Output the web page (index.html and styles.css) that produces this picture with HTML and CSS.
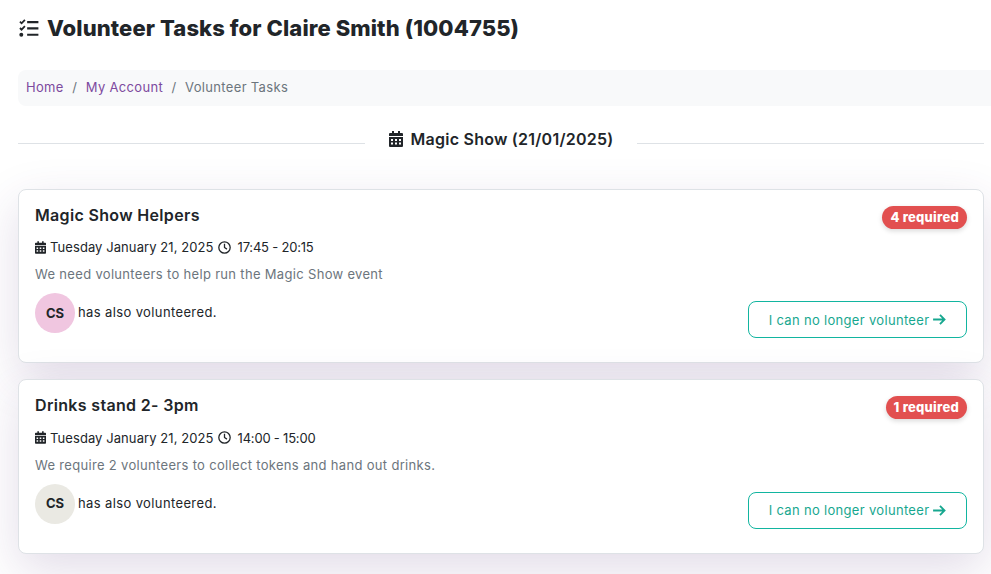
FILE: index.html
```html
<!DOCTYPE html>
<html lang="en">
<head>
    <meta charset="UTF-8">
    <meta name="viewport" content="width=device-width, initial-scale=1.0">
    <title>Volunteer Tasks</title>
    <link rel="stylesheet" href="styles.css">
</head>
<body>

    <!-- Page title -->
    <h1 class="page-title">
        <svg class="title-icon" viewBox="0 0 22 20" width="21" height="18" fill="none" stroke="#212529">
            <path d="M1.500 3l1.800 1.800L7 1M1.500 10l1.800 1.800L7 8" stroke-width="2"/>
            <circle cx="3" cy="17.500" r="2.200" fill="#212529" stroke="none"/>
            <path d="M9.500 3.500H22M9.500 10.500H22M9.500 17.500H22" stroke-width="2.400"/>
        </svg>
        <span>Volunteer Tasks for Claire Smith (1004755)</span>
    </h1>

    <!-- Breadcrumb -->
    <nav class="breadcrumb">
        <a href="#">Home</a>
        <span class="sep">/</span>
        <a href="#">My Account</a>
        <span class="sep">/</span>
        <span class="current">Volunteer Tasks</span>
    </nav>

    <!-- Event divider -->
    <div class="event-heading">
        <span class="line"></span>
        <h2>
            <svg viewBox="0 0 14 16" width="14" height="16" fill="#212529">
                <path d="M3 0h2v2h4V0h2v2h2a1 1 0 0 1 1 1v2H0V3a1 1 0 0 1 1-1h2z"/>
                <path fill-rule="evenodd" d="M0 6h14v9a1 1 0 0 1-1 1H1a1 1 0 0 1-1-1zm2 2v2h2V8zm4 0v2h2V8zm4 0v2h2V8zm-8 3.500v2h2v-2zm4 0v2h2v-2zm4 0v2h2v-2z"/>
            </svg>
            Magic Show (21/01/2025)
        </h2>
        <span class="line"></span>
    </div>

    <!-- Task 1 -->
    <div class="card">
        <div class="card-top">
            <h3>Magic Show Helpers</h3>
            <span class="badge">4 required</span>
        </div>
        <div class="when">
            <svg viewBox="0 0 14 16" width="11" height="13" fill="#212529">
                <path d="M3 0h2v2h4V0h2v2h2a1 1 0 0 1 1 1v2H0V3a1 1 0 0 1 1-1h2z"/>
                <path fill-rule="evenodd" d="M0 6h14v9a1 1 0 0 1-1 1H1a1 1 0 0 1-1-1zm2 2v2h2V8zm4 0v2h2V8zm4 0v2h2V8zm-8 3.500v2h2v-2zm4 0v2h2v-2zm4 0v2h2v-2z"/>
            </svg>
            <span>Tuesday January 21, 2025</span>
            <svg viewBox="0 0 16 16" width="13" height="13" fill="none" stroke="#212529" stroke-width="1.600">
                <circle cx="8" cy="8" r="7"/>
                <path d="M8 3.500V8l3 2"/>
            </svg>
            <span class="time">17:45 - 20:15</span>
        </div>
        <p class="desc">We need volunteers to help run the Magic Show event</p>
        <div class="card-bottom">
            <div class="others">
                <span class="avatar pink">CS</span>
                <span class="others-text">has also volunteered.</span>
            </div>
            <a href="#" class="btn">I can no longer volunteer
                <svg viewBox="0 0 14 12" width="13" height="11" fill="none" stroke="#17a78f" stroke-width="2">
                    <path d="M0 6h12M7.500 1l5 5-5 5"/>
                </svg>
            </a>
        </div>
    </div>

    <!-- Task 2 -->
    <div class="card">
        <div class="card-top">
            <h3>Drinks stand 2- 3pm</h3>
            <span class="badge">1 required</span>
        </div>
        <div class="when">
            <svg viewBox="0 0 14 16" width="11" height="13" fill="#212529">
                <path d="M3 0h2v2h4V0h2v2h2a1 1 0 0 1 1 1v2H0V3a1 1 0 0 1 1-1h2z"/>
                <path fill-rule="evenodd" d="M0 6h14v9a1 1 0 0 1-1 1H1a1 1 0 0 1-1-1zm2 2v2h2V8zm4 0v2h2V8zm4 0v2h2V8zm-8 3.500v2h2v-2zm4 0v2h2v-2zm4 0v2h2v-2z"/>
            </svg>
            <span>Tuesday January 21, 2025</span>
            <svg viewBox="0 0 16 16" width="13" height="13" fill="none" stroke="#212529" stroke-width="1.600">
                <circle cx="8" cy="8" r="7"/>
                <path d="M8 3.500V8l3 2"/>
            </svg>
            <span class="time">14:00 - 15:00</span>
        </div>
        <p class="desc">We require 2 volunteers to collect tokens and hand out drinks.</p>
        <div class="card-bottom">
            <div class="others">
                <span class="avatar grey">CS</span>
                <span class="others-text">has also volunteered.</span>
            </div>
            <a href="#" class="btn">I can no longer volunteer
                <svg viewBox="0 0 14 12" width="13" height="11" fill="none" stroke="#17a78f" stroke-width="2">
                    <path d="M0 6h12M7.500 1l5 5-5 5"/>
                </svg>
            </a>
        </div>
    </div>

</body>
</html>
```

FILE: styles.css
```css
body {
    margin: 0;
    padding: 0 7px 20px 18px;
    background-color: #fff;
    font-family: 'Inter', 'Liberation Sans', sans-serif;
    font-size: 13px;
    color: #212529;
    overflow: hidden;
}

/* Page title */
.page-title {
    display: flex;
    align-items: center;
    gap: 8px;
    margin: 0;
    padding-top: 14px;
    height: 28px;
    font-size: 22px;
    font-weight: 800;
    letter-spacing: 0.1px;
}

.title-icon {
    flex-shrink: 0;
}

/* Breadcrumb */
.breadcrumb {
    display: flex;
    align-items: center;
    gap: 8.5px;
    height: 34px;
    margin: 28px -7px 0 0;
    padding: 0 0 2px 8px;
    background-color: #f8f9fa;
    border-radius: 8px 0 0 8px;
    color: #6c757d;
    letter-spacing: 0.33px;
}

.breadcrumb a {
    color: #7d4a9e;
    text-decoration: none;
}

.sep {
    color: #6c757d;
}

/* Event divider */
.event-heading {
    display: flex;
    align-items: center;
    gap: 24px;
    height: 28px;
    margin-top: 19px;
}

.event-heading .line {
    flex: 1;
    margin-top: 8px;
    border-top: 1px solid #dee2e6;
}

.event-heading h2 {
    display: flex;
    align-items: center;
    gap: 8px;
    margin: 0;
    font-size: 16px;
    font-weight: 600;
    letter-spacing: 0.24px;
}

/* Task cards */
.card {
    height: 172.3px;
    margin-top: 16.1px;
    padding: 0 16px;
    background-color: #fff;
    border: 1px solid #dee2e6;
    border-radius: 8px;
    box-shadow: 0 16px 48px rgba(82, 45, 120, 0.17);
}

.event-heading + .card {
    margin-top: 36px;
}

.card-top {
    display: flex;
    justify-content: space-between;
    align-items: flex-start;
    padding-top: 15px;
}

.card-top h3 {
    margin: 0;
    font-size: 16px;
    font-weight: 600;
    line-height: 20px;
    letter-spacing: 0.33px;
}

.badge {
    margin-top: 1px;
    padding: 3px 8px;
    background-color: #e25050;
    border-radius: 12px;
    box-shadow: 0 2px 5px rgba(0, 0, 0, 0.15);
    color: #fff;
    font-size: 13px;
    font-weight: 800;
    line-height: 17px;
    letter-spacing: 0.25px;
}

.when {
    display: flex;
    align-items: center;
    gap: 4px;
    margin-top: 8.4px;
    height: 20px;
    letter-spacing: 0.08px;
}

.time {
    margin-left: 3px;
    letter-spacing: -0.2px;
}

.desc {
    margin: 7px 0 0;
    line-height: 20px;
    color: #6c757d;
    letter-spacing: 0.32px;
}

.card-bottom {
    display: flex;
    justify-content: space-between;
    align-items: flex-start;
    margin-top: 9px;
}

.others {
    display: flex;
    align-items: flex-start;
    gap: 3px;
}

.others-text {
    line-height: 38px;
    letter-spacing: 0.38px;
}

.avatar {
    display: flex;
    justify-content: center;
    align-items: center;
    width: 40px;
    height: 39px;
    padding-bottom: 1px;
    border-radius: 50%;
    font-weight: 700;
}

.avatar.pink {
    background-color: #f0c6e0;
}

.avatar.grey {
    background-color: #eae9e3;
}

.btn {
    display: flex;
    align-items: center;
    justify-content: center;
    gap: 4px;
    width: 217px;
    height: 35px;
    margin-top: 8px;
    border: 1px solid #12b5a0;
    border-radius: 8px;
    color: #17a78f;
    text-decoration: none;
    letter-spacing: 0.32px;
}
```
